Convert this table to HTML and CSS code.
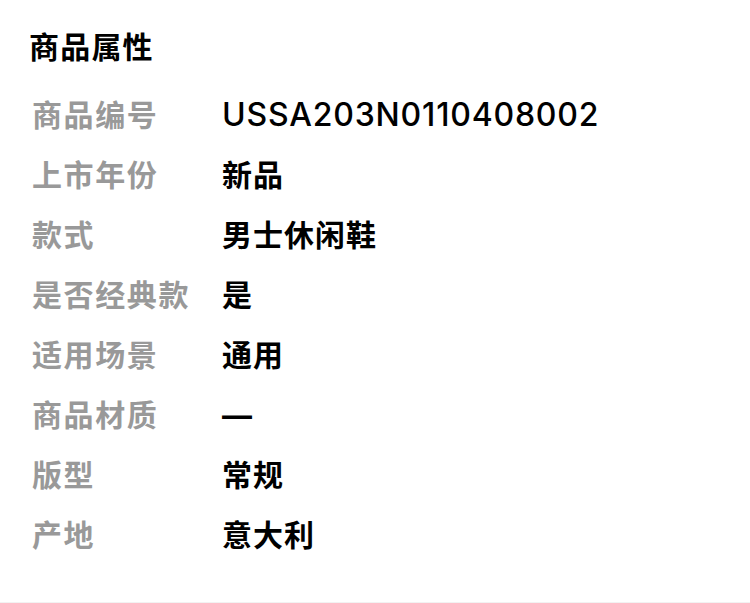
FILE: index.html
```html
<!DOCTYPE html>
<html lang="zh-CN">
<head>
  <meta charset="UTF-8" />
  <meta name="viewport" content="width=device-width, initial-scale=1" />
  <title>商品属性</title>
  <link rel="stylesheet" href="styles.css">
</head>
<body>
  <section class="attr-panel">
    <h2 class="attr-title">商品属性</h2>
    <ul class="attr-list">
      <li class="attr-row"><span class="attr-label">商品编号</span><span class="attr-value attr-code">USSA203N0110408002</span></li>
      <li class="attr-row"><span class="attr-label">上市年份</span><span class="attr-value">新品</span></li>
      <li class="attr-row"><span class="attr-label">款式</span><span class="attr-value">男士休闲鞋</span></li>
      <li class="attr-row"><span class="attr-label">是否经典款</span><span class="attr-value">是</span></li>
      <li class="attr-row"><span class="attr-label">适用场景</span><span class="attr-value">通用</span></li>
      <li class="attr-row"><span class="attr-label">商品材质</span><span class="attr-value">—</span></li>
      <li class="attr-row"><span class="attr-label">版型</span><span class="attr-value">常规</span></li>
      <li class="attr-row"><span class="attr-label">产地</span><span class="attr-value">意大利</span></li>
    </ul>
  </section>
  <div class="next-section" aria-hidden="true"></div>
</body>
</html>
```

FILE: styles.css
```css
* {
  box-sizing: border-box;
}
body {
  margin: 0;
  background: #fff;
  font-family: Inter, 'Noto Sans CJK SC', sans-serif;
  color: #000;
}
.attr-panel {
  padding: 27px 0 37px 32px;
}
.attr-title {
  margin: 0 0 18px -3px;
  font-size: 30px;
  line-height: 40px;
  font-weight: 700;
  letter-spacing: 1.2px;
}
.attr-list {
  list-style: none;
  margin: 0;
  padding: 0;
}
.attr-row {
  display: flex;
  height: 60px;
  line-height: 60px;
  font-size: 30px;
  letter-spacing: 1.6px;
}
.attr-label {
  width: 190px;
  flex-shrink: 0;
  color: #999;
  font-weight: 700;
}
.attr-value {
  font-weight: 700;
  letter-spacing: 1px;
}
.attr-code {
  font-size: 32px;
  font-weight: 500;
  letter-spacing: 0.8px;
}
.next-section {
  height: 20px;
  background: #f2f2f2;
}
```
